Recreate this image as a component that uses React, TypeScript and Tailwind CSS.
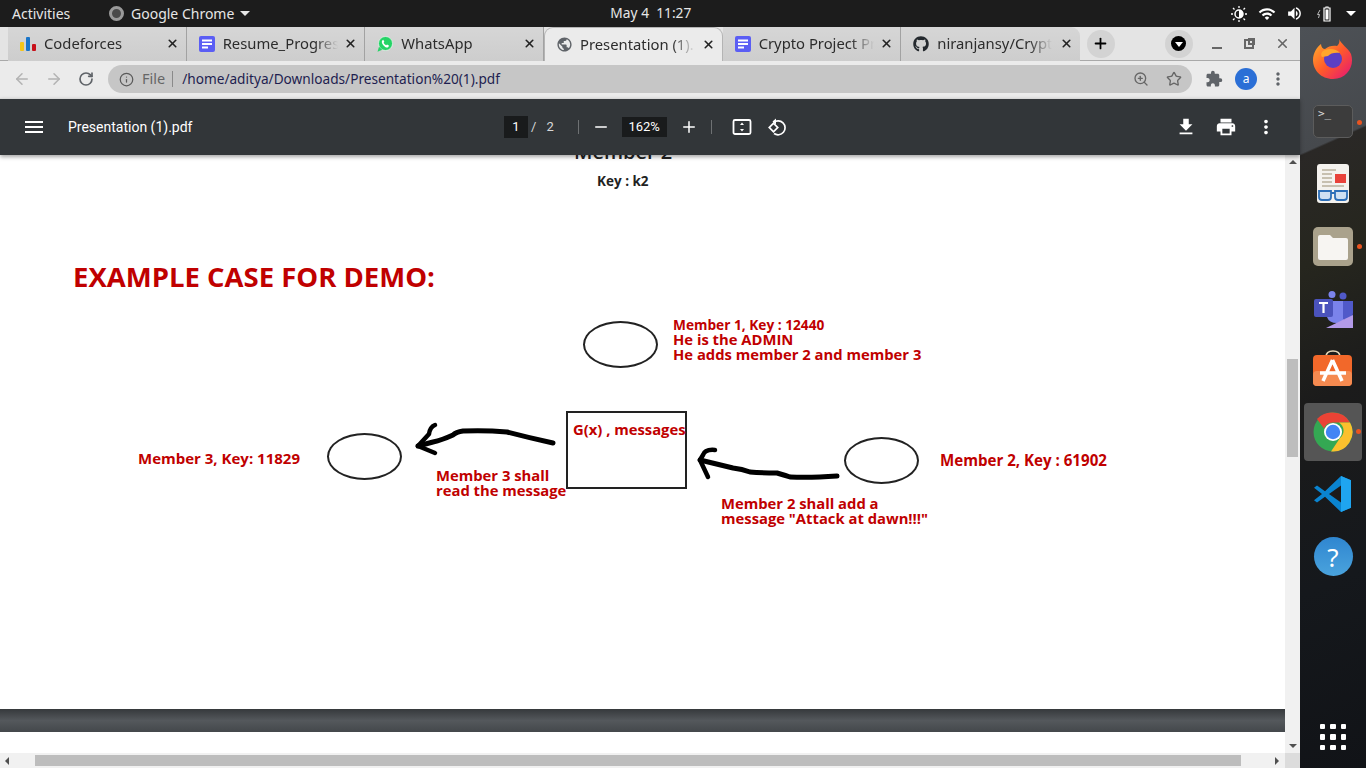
import type { ReactNode } from "react";
import { ArrowLeft, ArrowRight, Info, Minus, Plus, RotateCw, Star, X, ZoomIn } from "lucide-react";
import { FaGithub } from "react-icons/fa";
import { MdExtension, MdFileDownload, MdMenu, MdMoreVert, MdPrint, MdPublic, MdVolumeUp, MdWifi } from "react-icons/md";

const ui = "font-['Noto_Sans',sans-serif]";
const pdf = "font-['Open_Sans',sans-serif]";

function DocsIcon() {
  return (
    <svg width="16" height="16" viewBox="0 0 16 16">
      <rect width="16" height="16" rx="2" fill="#5b5ef4" />
      <rect x="3" y="3.500" width="10" height="2" fill="#fff" />
      <rect x="3" y="7" width="10" height="2" fill="#fff" />
      <rect x="3" y="10.500" width="6" height="2" fill="#fff" />
    </svg>
  );
}

function BarsIcon() {
  return (
    <svg width="16" height="16" viewBox="0 0 16 16">
      <rect x="0" y="6" width="4" height="9" rx="1" fill="#f5c518" />
      <rect x="6" y="1" width="4" height="14" rx="1" fill="#1a75c9" />
      <rect x="12" y="8" width="4" height="7" rx="1" fill="#c8101a" />
    </svg>
  );
}

function WhatsappIcon() {
  return (
    <svg width="16" height="16" viewBox="0 0 16 16">
      <circle cx="8.500" cy="7.500" r="7" fill="#25d366" stroke="#fff" strokeWidth="0.600" />
      <path d="M0.500 15.800l1.500-5 3.200 3z" fill="#25d366" />
      <path d="M5.500 4.200c-1 1-1 2.700.6 4.700s3.600 3 5 2.400l1-1.500-2-1.200-1 .7c-1-.4-2-1.500-2.500-2.500l.7-1-1-2z" fill="#fff" />
    </svg>
  );
}

const tabs: { label: string; icon: ReactNode; active?: boolean }[] = [
  { label: "Codeforces", icon: <BarsIcon /> },
  { label: "Resume_Progress", icon: <DocsIcon /> },
  { label: "WhatsApp", icon: <WhatsappIcon /> },
  { label: "Presentation (1).pdf", icon: <MdPublic size={17} className="text-[#5f6368]" />, active: true },
  { label: "Crypto Project Proposal", icon: <DocsIcon /> },
  { label: "niranjansy/Crypto", icon: <FaGithub size={16} className="text-[#24292e]" /> },
];

function Tab({ label, icon, active, last }: { label: string; icon: ReactNode; active?: boolean; last?: boolean }) {
  return (
    <div
      className={`flex h-[34px] w-[178.67px] shrink-0 items-center pr-[7px] ${
        active
          ? "z-10 rounded-t-[9px] border border-b-0 border-[#b4b4b4] bg-[#ebebeb] pl-[11px]"
          : `bg-gradient-to-b from-[#d6d6d6] to-[#cdcdcd] pl-[12px] ${last ? "rounded-tr-[9px]" : "border-r border-[#a2a2a2]"}`
      }`}
    >
      <span className="flex w-[24px] shrink-0 items-center">{icon}</span>
      <span className="w-[115px] shrink-0 overflow-hidden whitespace-nowrap text-[14.800px] text-[#2c2c2c] [mask-image:linear-gradient(to_right,black_80%,transparent)]">
        {label}
      </span>
      <X size={13} strokeWidth={3} className="ml-auto text-[#222]" />
    </div>
  );
}

function TopBar() {
  return (
    <div className={`${ui} flex h-[27px] items-center bg-[#1c1c1c] text-[14px] text-[#e6e6e6]`}>
      <span className="ml-[12px] w-[97px]">Activities</span>
      <span className="h-[15px] w-[15px] rounded-full border-[3px] border-[#9a9a9a] bg-[#4a4a4a]" />
      <span className="ml-[7px]">Google Chrome</span>
      <span className="ml-[6px] h-0 w-0 border-x-[5px] border-t-[5px] border-x-transparent border-t-[#e6e6e6]" />
      <span className="ml-[360px] text-[13.750px] whitespace-pre">May 4  11:27</span>
      <div className="ml-auto mr-[10px] flex items-center text-white">
        <svg width="16" height="16" viewBox="0 0 16 16" className="mr-[11px]">
          <circle cx="8" cy="8" r="4" fill="none" stroke="#fff" strokeWidth="1.500" />
          <path d="M8 0v2M8 14v2M0 8h2M14 8h2M2 2l1.500 1.500M12.500 12.500L14 14M2 14l1.500-1.500M12.500 3.500L14 2" stroke="#fff" strokeWidth="1.300" />
          <path d="M8 4a4 4 0 0 1 0 8z" fill="#fff" />
        </svg>
        <MdWifi size={18} className="mr-[10px]" />
        <MdVolumeUp size={17} className="mr-[14px]" />
        <svg width="14" height="16" viewBox="0 0 14 16" className="mr-[15px]">
          <path d="M3 4L0.500 8.500h2L1.500 12" fill="none" stroke="#bbb" strokeWidth="1" />
          <path d="M7 2h2V1h2v1h2v13H7z" fill="none" stroke="#fff" strokeWidth="1.200" />
          <rect x="8.500" y="3.500" width="3" height="10" fill="#fff" />
        </svg>
        <span className="h-0 w-0 border-x-[5px] border-t-[5px] border-x-transparent border-t-white" />
      </div>
    </div>
  );
}

function TabStrip() {
  return (
    <div className={`${ui} relative flex h-[34px] items-center border-b border-[#a9a9a9] bg-[#e4e4e4] pl-[8px]`}>
      {tabs.map((t, i) => (
        <Tab key={t.label} label={t.label} icon={t.icon} active={t.active} last={i === tabs.length - 1} />
      ))}
      <span className="ml-[7px] flex h-[28px] w-[28px] items-center justify-center rounded-full bg-[#d3d3d3]">
        <Plus size={17} strokeWidth={2.500} className="text-black" />
      </span>
      <span className="ml-[50px] flex h-[28px] w-[28px] items-center justify-center rounded-full bg-[#d3d3d3]">
        <span className="flex h-[15px] w-[15px] items-center justify-center rounded-full bg-black">
          <span className="mt-[2px] h-0 w-0 border-x-[4px] border-t-[5px] border-x-transparent border-t-white" />
        </span>
      </span>
      <span className="ml-[19px] mt-[9px] h-[2px] w-[10px] bg-[#666]" />
      <span className="relative ml-[22px] h-[10px] w-[10px] border-2 border-[#666]">
        <span className="absolute -right-[3px] -top-[3px] h-[7px] w-[7px] border-2 border-[#666]" />
      </span>
      <X size={15} strokeWidth={2.500} className="ml-[21px] text-[#666]" />
    </div>
  );
}

function AddressBar() {
  return (
    <div className={`${ui} flex h-[37px] items-center bg-[#ebebeb] pb-[1px]`}>
      <ArrowLeft size={18} strokeWidth={2} className="ml-[13px] text-[#b3b3b3]" />
      <ArrowRight size={18} strokeWidth={2} className="ml-[14px] text-[#b3b3b3]" />
      <RotateCw size={16} strokeWidth={2.500} className="ml-[15px] text-[#5f6368]" />
      <div className="ml-[14px] flex h-[28px] w-[1084px] items-center rounded-full bg-[#c6c6c6] text-[14.500px]">
        <Info size={15} strokeWidth={2} className="ml-[11px] text-[#5a5a5a]" />
        <span className="ml-[8px] text-[#666]">File</span>
        <span className="ml-[7px] h-[16px] w-px bg-[#8a8a8a]" />
        <span className="ml-[9px] text-[13.650px] text-[#1e1e50]">/home/aditya/Downloads/Presentation%20(1).pdf</span>
        <ZoomIn size={16} strokeWidth={2} className="ml-auto text-[#666]" />
        <Star size={16} strokeWidth={2} className="ml-[17px] mr-[10px] text-[#666]" />
      </div>
      <MdExtension size={18} className="ml-[13px] text-[#5f6368]" />
      <span className="ml-[12px] flex h-[22px] w-[22px] items-center justify-center rounded-full bg-[#2b6fd6] text-[12px] text-white">a</span>
      <MdMoreVert size={20} className="ml-[11px] text-[#5f6368]" />
    </div>
  );
}

function PdfToolbar() {
  return (
    <div className="relative z-20 flex h-[57px] items-center border-t border-[#d8d8d8] bg-[#323639] text-white font-['Roboto',sans-serif] shadow-[0_2px_4px_rgba(0,0,0,0.35)]">
      <MdMenu size={24} className="ml-[22px]" />
      <span className="ml-[22px] w-[436px] text-[14px]">Presentation (1).pdf</span>
      <span className="flex h-[22px] w-[24px] items-center justify-center bg-[#191b1c] text-[13px]">1</span>
      <span className="ml-[3px] text-[13px] text-[#d8d8d8]">/</span>
      <span className="ml-[10px] text-[13px] text-[#d8d8d8]">2</span>
      <span className="ml-[24px] h-[14px] w-px bg-[#6e7173]" />
      <Minus size={18} strokeWidth={2} className="ml-[13px]" />
      <span className="ml-[12px] flex h-[20px] w-[45px] items-center justify-center bg-[#191b1c] text-[13px]">162%</span>
      <Plus size={18} strokeWidth={2} className="ml-[13px]" />
      <span className="ml-[13px] h-[14px] w-px bg-[#6e7173]" />
      <svg width="20" height="18" viewBox="0 0 20 18" className="ml-[20px]">
        <rect x="1.500" y="2" width="17" height="14" rx="1.500" fill="none" stroke="#fff" strokeWidth="1.800" />
        <path d="M10 4.500l2 2.500H8zM10 13.500l2-2.500H8z" fill="#fff" />
      </svg>
      <svg width="20" height="20" viewBox="0 0 20 20" className="ml-[15px]">
        <path d="M6.500 5.500A7 7 0 1 1 7 16.500" fill="none" stroke="#fff" strokeWidth="1.700" />
        <path d="M9 1.500v6l-3.500-3z" fill="#fff" />
        <rect x="3.500" y="7.500" width="6" height="6" transform="rotate(45 6.500 10.500)" fill="#323639" stroke="#fff" strokeWidth="1.700" />
      </svg>
      <MdFileDownload size={22} className="ml-auto" />
      <MdPrint size={22} className="ml-[18px]" />
      <MdMoreVert size={22} className="ml-[18px] mr-[23px]" />
    </div>
  );
}

// diagram nodes sit at their own spots on the pdf page
function Note({ x, y, lines, size = "text-[14.800px]" }: { x: number; y: number; lines: string[]; size?: string }) {
  return (
    <div className={`absolute ${size} font-bold leading-[15px] whitespace-nowrap text-[#c00000]`} style={{ left: x, top: y }}>
      {lines.map((l) => (
        <div key={l}>{l}</div>
      ))}
    </div>
  );
}

function Ellipse({ x, y }: { x: number; y: number }) {
  return <div className="absolute h-[47px] w-[75px] rounded-[50%] border-2 border-[#222]" style={{ left: x, top: y }} />;
}

function PdfPage() {
  return (
    <div className={`${pdf} relative h-[554px] overflow-hidden bg-white`}>
      <div className="absolute left-[574px] top-[-18px] text-[20px] font-semibold whitespace-nowrap text-[#222]">Member 2</div>
      <div className="absolute left-[597px] top-[16px] text-[13.500px] font-bold text-[#222]">Key : k2</div>
      <div className="absolute left-[73px] top-[101px] text-[27.500px] font-bold whitespace-nowrap text-[#c00000]">EXAMPLE CASE FOR DEMO:</div>

      <Ellipse x={583} y={166} />
      <Note x={673} y={162} lines={["Member 1, Key : 12440"]} size="text-[13.700px]" />
      <Note x={673} y={177} lines={["He is the ADMIN", "He adds member 2 and member 3"]} />

      <div className="absolute left-[566px] top-[256px] h-[78px] w-[121px] border-2 border-[#222]" />
      <Note x={573} y={267} lines={["G(x) , messages"]} />

      <Ellipse x={327} y={278} />
      <Note x={138} y={296} lines={["Member 3, Key: 11829"]} size="text-[15px]" />
      <Note x={436} y={313} lines={["Member 3 shall", "read the message"]} />

      <Ellipse x={844} y={282} />
      <Note x={940} y={298} lines={["Member 2, Key : 61902"]} size="text-[15.100px]" />
      <Note x={721} y={341} lines={["Member 2 shall add a", 'message "Attack at dawn!!!"']} />

      <svg width="1285" height="554" className="pointer-events-none absolute left-0 top-0">
        <g fill="none" stroke="#000" strokeLinecap="round" strokeLinejoin="round">
          <path d="M553 288Q530 283 507 277Q485 275 463 276Q456 277 453 280Q442 285 433 287L418 291" strokeWidth="5" />
          <path d="M435 270Q430 272 429 279L418 291L435 298" strokeWidth="4.500" />
          <path d="M837 321Q810 323 790 322Q784 320 777 318Q760 318 750 317Q742 314 733 313L700 305" strokeWidth="5" />
          <path d="M715 295Q705 294 703 300L700 305L708 322" strokeWidth="4.500" />
        </g>
      </svg>
    </div>
  );
}

function Viewer() {
  return (
    <div className="flex h-[598px]">
      <div className="w-[1285px]">
        <PdfPage />
        <div className="h-[23px] bg-gradient-to-b from-[#36393c] via-[#54585c] to-[#44484b]" />
      </div>
      <div className="flex w-[15px] flex-col items-center bg-[#f1f1f1]">
        <span className="mt-[5px] h-0 w-0 border-x-[4px] border-b-[4px] border-x-transparent border-b-[#505050]" />
        <div className="mt-[195px] h-[98px] w-[11px] bg-[#bdbdbd]" />
        <span className="mt-auto mb-[5px] h-0 w-0 border-x-[4px] border-t-[4px] border-x-transparent border-t-[#505050]" />
      </div>
    </div>
  );
}

function BottomScrollbar() {
  return (
    <div className="flex h-[15px] items-center bg-[#f1f1f1]">
      <span className="ml-[5px] h-0 w-0 border-y-[4px] border-r-[4px] border-y-transparent border-r-[#505050]" />
      <div className="ml-[26px] h-[11px] w-[1206px] bg-[#bdbdbd]" />
      <span className="ml-[34px] h-0 w-0 border-y-[4px] border-l-[4px] border-y-transparent border-l-[#505050]" />
      <span className="ml-auto h-full w-[15px] bg-[#dcdcdc]" />
    </div>
  );
}

function Dock() {
  return (
    <div className="flex w-[66px] flex-col items-center bg-[linear-gradient(156deg,#4d5156_0px,#46494d_116px,#2a2826_118px,#26261e_220px,#1b1b1b_350px,#15181c_520px,#111317_704px)]">
      {/* firefox */}
      <div className="mt-[6px] flex h-[52px] w-full items-center justify-center">
        <svg width="40" height="42" viewBox="0 0 40 42">
          <defs>
            <linearGradient id="fx" x1="0" y1="0" x2="1" y2="1">
              <stop offset="0" stopColor="#ffb52c" />
              <stop offset="0.500" stopColor="#ff5a2a" />
              <stop offset="1" stopColor="#e3127a" />
            </linearGradient>
          </defs>
          <path d="M26 1c2 5 9 9 12 15 4 12-4 25-18 25C8 41 0 32 0 22 0 15 4 9 8 6c0 3 2 5 4 5 3-3 9-4 12-3 2-2 3-4 2-7z" fill="url(#fx)" />
          <circle cx="20" cy="21" r="9" fill="#5b3fc4" />
          <path d="M12 12c5-2 12-1 15 3-4-1-10 0-12 3l-6 1c-2-3 0-6 3-7z" fill="#ffa62b" />
        </svg>
      </div>
      {/* terminal */}
      <div className="relative mt-[20px] h-[33px] w-full">
        <div className="ml-[13px] h-[33px] w-[40px] rounded-[5px] border border-[#5c5c5c] bg-[#3c3c3c] pl-[4px] font-['DejaVu_Sans_Mono',monospace] text-[11px] leading-[16px] text-[#ddd]">&gt;_</div>
        <span className="absolute right-[4px] top-[15px] h-[5px] w-[5px] rounded-full bg-[#e95420]" />
      </div>
      {/* reader */}
      <div className="mt-[26px] flex h-[39px] w-[32px] flex-col rounded-[3px] bg-[#f4f2ee] px-[4px] pt-[4px]">
        <svg width="32" height="35" viewBox="0 0 32 35" className="-ml-[4px]">
          <path d="M5 2h14M5 6h10M5 10h10M5 14h10M5 18h22" stroke="#b8b09c" strokeWidth="1.500" />
          <rect x="18" y="6" width="11" height="9" fill="#e8423a" />
          <path d="M2 23h12v6q0 3-3 3H5q-3 0-3-3zM18 23h12v6q0 3-3 3h-6q-3 0-3-3zM14 25h4" fill="#cfe0f2" stroke="#2d6fb8" strokeWidth="1.800" />
        </svg>
      </div>
      {/* files */}
      <div className="relative mt-[24px] h-[39px] w-full">
        <div className="ml-[13px] flex h-[39px] w-[40px] items-center justify-center rounded-[5px] bg-[#aaa28c]">
          <svg width="30" height="26" viewBox="0 0 30 26">
            <path d="M2 1h10l3 3h13a2 2 0 0 1 2 2v18a2 2 0 0 1-2 2H2a2 2 0 0 1-2-2V3a2 2 0 0 1 2-2z" fill="#f7f5f2" />
          </svg>
        </div>
        <span className="absolute right-[4px] top-[17px] h-[5px] w-[5px] rounded-full bg-[#e95420]" />
      </div>
      {/* teams */}
      <svg width="40" height="38" viewBox="0 0 40 38" className="mt-[25px] shrink-0">
        <circle cx="19" cy="3.500" r="3.500" fill="#7b83eb" />
        <circle cx="30" cy="5" r="3.500" fill="#5059c9" />
        <path d="M12 10h20v14q0 8-8 8t-10-6z" fill="#7b83eb" />
        <path d="M30 10h10v12q0 6-5 6h-5z" fill="#5059c9" />
        <rect x="1" y="8" width="19" height="18" rx="2" fill="#4b53bc" />
        <path d="M6 12h9M10.500 12v10" stroke="#fff" strokeWidth="2.200" />
        <path d="M13 37L40 24v13z" fill="#b39ae8" />
      </svg>
      {/* software */}
      <svg width="40" height="38" viewBox="0 0 40 38" className="mt-[20px] shrink-0">
        <path d="M13 8q0-6 7-6t7 6" fill="none" stroke="#e8d8b8" strokeWidth="1.600" />
        <rect y="6" width="39" height="31" rx="4" fill="#f2682a" />
        <rect y="22" width="39" height="15" rx="4" fill="#f58a50" />
        <path d="M19.500 11L10 32M19.500 11L29 32M7 24h26" stroke="#fff" strokeWidth="3.500" fill="none" />
      </svg>
      {/* chrome, running */}
      <div className="relative mt-[16px] flex h-[58px] w-[58px] shrink-0 items-center justify-center rounded-[4px] bg-[#555555]">
        <svg width="40" height="40" viewBox="0 0 40 40">
          <circle cx="20" cy="20" r="19.500" fill="#34a853" />
          <path d="M20 .5a19.500 19.500 0 0 1 17 10H20a9.500 9.500 0 0 0-9 6L4 7A19.500 19.500 0 0 1 20 .5z" fill="#ea4335" />
          <path d="M37 10.500A19.500 19.500 0 0 1 18 39.400L27 26a9.500 9.500 0 0 0-1-15.500z" fill="#fbc02d" />
          <circle cx="20" cy="20" r="9" fill="#fff" />
          <circle cx="20" cy="20" r="7.200" fill="#4285f4" />
        </svg>
        <span className="absolute right-[1px] top-[26px] h-[5px] w-[5px] rounded-full bg-[#e95420]" />
      </div>
      {/* vscode */}
      <svg width="38" height="36" viewBox="0 0 38 38" preserveAspectRatio="none" className="mt-[15px] shrink-0">
        <path d="M27 0l10 4.500v29L27 38 11 22 3 28 0 25.500 8 19 0 12.500 3 10l8 6z" fill="#0a84d0" />
        <path d="M27 0l10 4.500v29L27 38V26l-8-7 8-7z" fill="#1fa5f0" />
        <path d="M27 10L15 19l12 9z" fill="#1c1a1a" />
      </svg>
      {/* help */}
      <div className="mt-[25px] flex h-[39px] w-[39px] shrink-0 items-center justify-center rounded-full bg-gradient-to-b from-[#2f86d0] to-[#4aa3dd] font-['Noto_Sans',sans-serif] text-[26px] leading-none text-white">
        ?
      </div>
      <div className="mt-auto mb-[18px] grid grid-cols-3 gap-x-[5px] gap-y-[5px]">
        {Array.from({ length: 9 }).map((_, i) => (
          <span key={i} className="h-[5.500px] w-[5.500px] rounded-[1px] bg-white" />
        ))}
      </div>
    </div>
  );
}

export default function App() {
  return (
    <div className="flex h-[768px] w-[1366px] flex-col overflow-hidden">
      <TopBar />
      <div className="flex h-[741px]">
        <div className="flex w-[1300px] flex-col">
          <TabStrip />
          <AddressBar />
          <PdfToolbar />
          <Viewer />
          <BottomScrollbar />
        </div>
        <Dock />
      </div>
    </div>
  );
}
